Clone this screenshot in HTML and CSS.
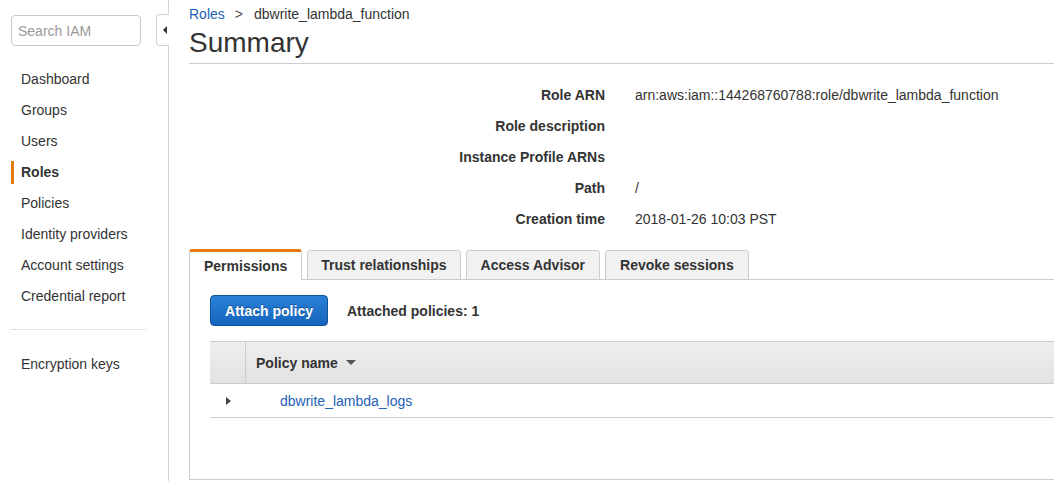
FILE: index.html
```html
<!DOCTYPE html>
<html lang="en">
<head>
<meta charset="utf-8">
<title>IAM Role Summary</title>
<link rel="stylesheet" href="styles.css">
</head>
<body>
<div class="app">
  <aside class="sidebar">
    <input class="search" type="text" placeholder="Search IAM">
    <button class="collapse" type="button" aria-label="Collapse"><span class="tri-left"></span></button>
    <nav class="nav">
      <a class="nav-item">Dashboard</a>
      <a class="nav-item">Groups</a>
      <a class="nav-item">Users</a>
      <a class="nav-item active">Roles</a>
      <a class="nav-item">Policies</a>
      <a class="nav-item">Identity providers</a>
      <a class="nav-item">Account settings</a>
      <a class="nav-item">Credential report</a>
    </nav>
    <div class="nav-divider"></div>
    <nav class="nav nav-secondary">
      <a class="nav-item">Encryption keys</a>
    </nav>
  </aside>
  <main class="main">
    <div class="breadcrumb"><a class="link">Roles</a><span class="sep">&gt;</span><span>dbwrite_lambda_function</span></div>
    <h1 class="title">Summary</h1>
    <div class="rule"></div>
    <dl class="details">
      <dt>Role ARN</dt><dd>arn:aws:iam::144268760788:role/dbwrite_lambda_function</dd>
      <dt>Role description</dt><dd></dd>
      <dt>Instance Profile ARNs</dt><dd></dd>
      <dt>Path</dt><dd>/</dd>
      <dt>Creation time</dt><dd>2018-01-26 10:03 PST</dd>
    </dl>
    <div class="tabs">
      <div class="tab active">Permissions</div>
      <div class="tab tab-narrow">Trust relationships</div>
      <div class="tab">Access Advisor</div>
      <div class="tab">Revoke sessions</div>
    </div>
    <section class="panel">
      <div class="toolbar">
        <button class="btn-primary" type="button">Attach policy</button>
        <span class="count">Attached policies: 1</span>
      </div>
      <div class="table">
        <div class="thead">
          <div class="cell-toggle"></div>
          <div class="cell-name">Policy name <span class="caret-down"></span></div>
        </div>
        <div class="trow">
          <div class="cell-toggle"><span class="caret-right"></span></div>
          <div class="cell-link"><a class="link">dbwrite_lambda_logs</a></div>
        </div>
      </div>
    </section>
  </main>
</div>
</body>
</html>
```

FILE: styles.css
```css
* { box-sizing: border-box; }
html, body { margin: 0; padding: 0; height: 100%; }
body {
  font-family: "Liberation Sans", Arial, sans-serif;
  font-size: 14px;
  color: #333;
  background: #fff;
  overflow: hidden;
}
.app { display: flex; height: 100vh; }

.sidebar {
  position: relative;
  width: 169px;
  flex: 0 0 169px;
  border-right: 1px solid #d5d5d5;
  padding: 15px 0 0 11px;
}
.search {
  display: block;
  width: 130px;
  height: 31px;
  border: 1px solid #c8c8c8;
  border-radius: 4px;
  padding: 0 6px;
  font-family: inherit;
  font-size: 14px;
  color: #333;
  outline: none;
}
.search::placeholder { color: #9a9a9a; }
.collapse {
  position: absolute;
  top: 14px;
  right: -1px;
  width: 13px;
  height: 32px;
  padding: 0;
  border: 1px solid #cfcfcf;
  border-right: none;
  border-radius: 4px 0 0 4px;
  background: #fff;
  display: flex;
  align-items: center;
  justify-content: center;
}
.tri-left {
  width: 0; height: 0;
  border-top: 4px solid transparent;
  border-bottom: 4px solid transparent;
  border-right: 4px solid #333;
  margin-left: 3px;
}
.nav { display: flex; flex-direction: column; gap: 8px; margin-top: 22px; }
.nav-item {
  display: block;
  height: 23px;
  line-height: 23px;
  padding-left: 7px;
  border-left: 3px solid transparent;
  color: #333;
  white-space: nowrap;
}
.nav-item.active { border-left-color: #e47911; font-weight: bold; }
.nav-divider {
  width: 135px;
  border-top: 1px dotted #c4c4c4;
  margin-top: 21px;
}
.nav-secondary { margin-top: 23px; }

.main {
  flex: 1;
  min-width: 0;
  padding: 6px 0 0 20px;
  overflow: hidden;
}
.link { color: #1e5fb4; text-decoration: none; cursor: pointer; }
.breadcrumb { line-height: 17px; display: flex; align-items: center; }
.sep { margin: 0 11px 0 10px; color: #555; }
.title {
  margin: 4px 0 0;
  font-size: 28px;
  font-weight: normal;
  line-height: 32px;
  color: #333;
}
.rule { border-top: 1px solid #cccccc; margin-top: 4px; }

.details {
  display: grid;
  grid-template-columns: 416px 1fr;
  column-gap: 30px;
  margin: 16px 0 0;
}
.details dt, .details dd {
  margin: 0;
  height: 31px;
  line-height: 31px;
  white-space: nowrap;
}
.details dt { text-align: right; font-weight: bold; }

.tabs {
  display: flex;
  align-items: flex-end;
  gap: 5px;
  margin-top: 14px;
  border-bottom: 1px solid #cccccc;
}
.tab {
  height: 30px;
  line-height: 28px;
  margin-bottom: -1px;
  padding: 0 14px;
  border: 1px solid #cccccc;
  border-radius: 3px 3px 0 0;
  background: #f1f1f1;
  font-weight: bold;
  white-space: nowrap;
}
.tab-narrow { padding: 0 13px; }
.tab.active {
  height: 31px;
  background: #fff;
  border-top: 3px solid #e47911;
  border-bottom: none;
}

.panel {
  height: 200px;
  border-left: 1px solid #cccccc;
  border-bottom: 1px solid #cccccc;
  padding: 15px 0 0 20px;
}
.toolbar { display: flex; align-items: center; gap: 19px; }
.btn-primary {
  height: 31px;
  width: 118px;
  padding: 0;
  border: 1px solid #11549a;
  border-radius: 4px;
  background: linear-gradient(#2b80d6, #1565bd);
  color: #fff;
  font-family: inherit;
  font-size: 14px;
  font-weight: bold;
  text-shadow: 0 -1px 0 rgba(0, 0, 0, 0.35);
}
.count { font-weight: bold; }

.table { margin-top: 15px; }
.thead {
  display: flex;
  height: 43px;
  border-top: 1px solid #cccccc;
  border-bottom: 1px solid #cccccc;
  background: linear-gradient(#eeeeee, #e2e2e2);
}
.thead .cell-toggle { border-right: 1px solid #cccccc; }
.cell-toggle {
  width: 36px;
  flex: 0 0 36px;
  display: flex;
  align-items: center;
  justify-content: center;
}
.cell-name {
  display: flex;
  align-items: center;
  padding-left: 10px;
  font-weight: bold;
  white-space: nowrap;
}
.caret-down {
  width: 0; height: 0;
  margin-left: 8px;
  border-left: 5px solid transparent;
  border-right: 5px solid transparent;
  border-top: 5px solid #555;
}
.trow {
  display: flex;
  height: 34px;
  border-bottom: 1px solid #cccccc;
}
.caret-right {
  width: 0; height: 0;
  border-top: 4px solid transparent;
  border-bottom: 4px solid transparent;
  border-left: 5px solid #444;
  margin-left: 1px;
}
.cell-link {
  display: flex;
  align-items: center;
  padding-left: 34px;
  white-space: nowrap;
}
```
